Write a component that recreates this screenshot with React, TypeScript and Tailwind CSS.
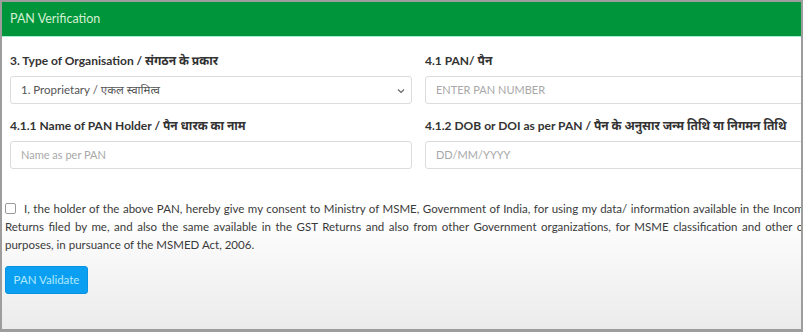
import React from "react";

const font = { fontFamily: "Lato, 'Noto Sans Devanagari', 'Noto Sans', sans-serif" };

const Field = ({ label, children }: { label: string; children: React.ReactNode }) => (
  <div className="flex flex-col">
    <label className="h-[18px] leading-[18px] text-[12px] font-bold text-[#333] mb-[6px] whitespace-nowrap">
      {label}
    </label>
    {children}
  </div>
);

const TextBox = ({ placeholder }: { placeholder: string }) => (
  <div className="h-[28px] border border-[#dcdcdc] rounded-[3px] bg-white flex items-center px-[10px] text-[11px] text-[#a8a8a8]">
    {placeholder}
  </div>
);

export default function App() {
  return (
    <div className="w-[803px] h-[332px] bg-[#9d9d9d] pt-[2px] pl-[2px] overflow-hidden" style={font}>
      <div className="w-[799px] h-[327px] overflow-hidden flex flex-col bg-gradient-to-b from-white via-white via-65% to-[#ebebeb]">
        {/* header */}
        <div className="h-[35px] shrink-0 bg-[#00953a] border-b border-[#a6f1d6] px-[8px] flex items-center text-[12.5px] text-[#d2f0d2]">
          PAN Verification
        </div>

        <div className="w-[900px] shrink-0">
          <div className="w-[833px] px-[8px] pt-[15px] grid grid-cols-2 gap-x-[13px] gap-y-[13px]">
            <Field label="3. Type of Organisation / संगठन के प्रकार">
              <div className="h-[28px] border border-[#dcdcdc] rounded-[3px] bg-white flex items-center justify-between pl-[10px] pr-[6px] text-[11.5px] text-[#555]">
                <span>1. Proprietary / एकल स्वामित्व</span>
                <svg width="8" height="6" viewBox="0 0 8 6" className="mt-[1px]">
                  <path d="M1 1.5 L4 4.5 L7 1.5" fill="none" stroke="#666" strokeWidth="1.2" />
                </svg>
              </div>
            </Field>
            <Field label="4.1 PAN/ पैन">
              <TextBox placeholder="ENTER PAN NUMBER" />
            </Field>
            <Field label="4.1.1 Name of PAN Holder / पैन धारक का नाम">
              <TextBox placeholder="Name as per PAN" />
            </Field>
            <Field label="4.1.2 DOB or DOI as per PAN / पैन के अनुसार जन्म तिथि या निगमन तिथि">
              <TextBox placeholder="DD/MM/YYYY" />
            </Field>
          </div>

          <p className="w-[831px] mt-[31px] px-[3px] text-[11.5px] leading-[18px] text-[#3a3a3a] text-justify">
            <span className="inline-block w-[11px] h-[11px] border border-[#9a9a9a] rounded-[2px] bg-white align-[-1px] mr-[8px]" />
            I, the holder of the above PAN, hereby give my consent to Ministry of MSME, Government of India, for using my
            data/ information available in the Income Tax Returns filed by me, and also the same available in the GST
            Returns and also from other Government organizations, for MSME classification and other official purposes,
            in pursuance of the MSMED Act, 2006.
          </p>

          <div className="px-[3px] mt-[12px]">
            <button className="w-[83px] h-[28px] rounded-[3px] bg-[#0b9ff1] border border-[#0a92e2] text-[11.5px] text-[#b0eaff]">
              PAN Validate
            </button>
          </div>
        </div>
      </div>
    </div>
  );
}
